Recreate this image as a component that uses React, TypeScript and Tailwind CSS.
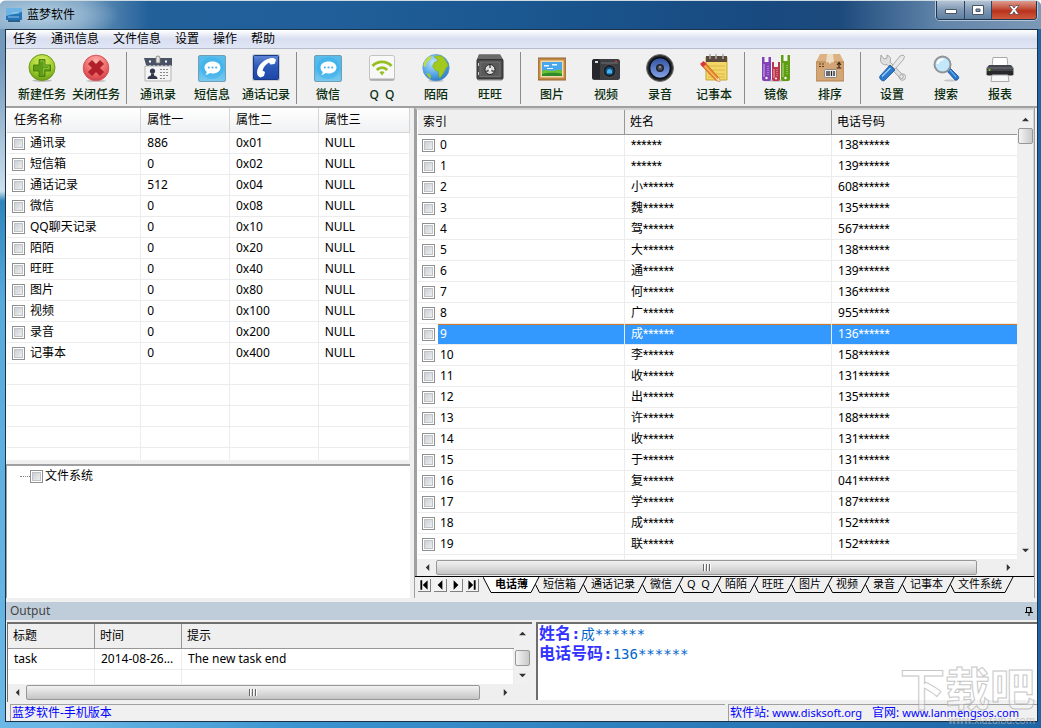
import type { ReactNode } from 'react';
import clsx from 'clsx';

const MENUS = ['任务', '通讯信息', '文件信息', '设置', '操作', '帮助'];

const TASKS: [string, string, string][] = [
  ['通讯录', '886', '0x01'],
  ['短信箱', '0', '0x02'],
  ['通话记录', '512', '0x04'],
  ['微信', '0', '0x08'],
  ['QQ聊天记录', '0', '0x10'],
  ['陌陌', '0', '0x20'],
  ['旺旺', '0', '0x40'],
  ['图片', '0', '0x80'],
  ['视频', '0', '0x100'],
  ['录音', '0', '0x200'],
  ['记事本', '0', '0x400'],
];

// [surname, phone prefix], the rest is masked
const CONTACTS: [string, string][] = [
  ['', '138'],
  ['', '139'],
  ['小', '608'],
  ['魏', '135'],
  ['驾', '567'],
  ['大', '138'],
  ['通', '139'],
  ['何', '136'],
  ['广', '955'],
  ['成', '136'],
  ['李', '158'],
  ['收', '131'],
  ['出', '135'],
  ['许', '188'],
  ['收', '131'],
  ['于', '131'],
  ['复', '041'],
  ['学', '187'],
  ['成', '152'],
  ['联', '152'],
];

const SELECTED = 9;

const SHEETS = ['电话薄', '短信箱', '通话记录', '微信', 'Q  Q', '陌陌', '旺旺', '图片', '视频', '录音', '记事本', '文件系统'];

/* ---------- toolbar icons ---------- */

function Icon({ children }: { children: ReactNode }) {
  return (
    <svg viewBox="0 0 28 28" className="size-7" aria-hidden="true">
      {children}
    </svg>
  );
}

function AddIcon() {
  return (
    <Icon>
      <defs>
        <radialGradient id="add" cx=".5" cy=".25" r=".8">
          <stop offset="0" stopColor="#d9ee62" />
          <stop offset=".6" stopColor="#9ecb2c" />
          <stop offset="1" stopColor="#5f9410" />
        </radialGradient>
      </defs>
      <ellipse cx="14" cy="26.6" rx="10" ry="1.3" fill="#bbb" />
      <circle cx="14" cy="13.5" r="13" fill="url(#add)" stroke="#6c9b1e" />
      <path d="M11 5.5h6v5.5h5.5v6H17v5.500h-6V17H5.500v-6H11z" fill="#5f9d18" stroke="#3a7509" strokeWidth=".8" />
      <path d="M12 7h4v5h5v2.500h-5.500V20" fill="none" stroke="#8cc43a" strokeWidth=".9" />
    </Icon>
  );
}

function CloseTaskIcon() {
  return (
    <Icon>
      <defs>
        <radialGradient id="del" cx=".5" cy=".25" r=".8">
          <stop offset="0" stopColor="#ffb3ac" />
          <stop offset=".6" stopColor="#ee6364" />
          <stop offset="1" stopColor="#c93a42" />
        </radialGradient>
      </defs>
      <ellipse cx="14" cy="26.800" rx="10" ry="1.200" fill="#c4c4c4" />
      <circle cx="14" cy="14" r="12.800" fill="url(#del)" stroke="#d5575c" />
      <path
        d="M10 6.500l4 4 4-4 3.500 3.500-4 4 4 4L18 21.500l-4-4-4 4L6.500 18l4-4-4-4z"
        fill="#b3202c"
        stroke="#931822"
        strokeWidth=".8"
        strokeLinejoin="round"
      />
    </Icon>
  );
}

function ContactsIcon() {
  return (
    <Icon>
      <path d="M1 12h26v15H1z" fill="#f4f4f4" stroke="#b5b5b5" />
      <path d="M0 4h28v8l-2-1-2 1-2-1-2 1-2-1-2 1-2-1-2 1-2-1-2 1-2-1-2 1-2-1z" fill="#4a5265" />
      <path d="M5 6.500h2v2H5zM21 6.500h2v2h-2z" fill="#fff" />
      <path d="M12 4a2 2 0 0 1 4 0v5h-4z" fill="#e2e2e2" stroke="#777" strokeWidth=".8" />
      <circle cx="8.500" cy="17" r="2.600" fill="#33394a" />
      <path d="M3.500 25c0-2 1-3 3.500-3.500v-2h3v2c2.500.500 3.500 1.500 3.500 3.500z" fill="#33394a" />
      <path d="M16 15.500h9M16 18.500h9M16 21.500h9M16 24.500h6" stroke="#888" strokeDasharray="2 1" />
    </Icon>
  );
}

function ChatIcon() {
  return (
    <Icon>
      <defs>
        <linearGradient id="chat" x1="0" y1="0" x2="0" y2="1">
          <stop offset="0" stopColor="#5bbdea" />
          <stop offset=".5" stopColor="#4ab8ee" />
          <stop offset="1" stopColor="#7cc9ee" />
        </linearGradient>
      </defs>
      <rect x=".5" y="1.500" width="27" height="26" rx="1.500" fill="url(#chat)" stroke="#6f9fb5" />
      <circle cx="14" cy="14" r="11" fill="#38aeea" opacity=".5" />
      <path
        d="M14.500 7.500c4.700 0 8 2.600 8 6s-3.300 6-8 6c-1 0-2-.100-2.900-.400-1 1-2.500 1.800-4.400 1.900 1-.900 1.500-2 1.500-3.200-1.400-1.100-2.200-2.600-2.200-4.300 0-3.400 3.300-6 8-6z"
        fill="#fff"
      />
      <circle cx="10.800" cy="13.500" r="1.100" fill="#45b1ea" />
      <circle cx="14.500" cy="13.500" r="1.100" fill="#45b1ea" />
      <circle cx="18.200" cy="13.500" r="1.100" fill="#45b1ea" />
    </Icon>
  );
}

function PhoneIcon() {
  return (
    <Icon>
      <defs>
        <linearGradient id="phone" x1="0" y1="0" x2="0" y2="1">
          <stop offset="0" stopColor="#5f86d6" />
          <stop offset=".45" stopColor="#2c58b8" />
          <stop offset="1" stopColor="#1c47a8" />
        </linearGradient>
      </defs>
      <rect x="0" y="0" width="28" height="27" rx="2" fill="#c8cacf" />
      <rect x="1.500" y="1.500" width="25" height="24" rx="1" fill="url(#phone)" stroke="#163a85" />
      <path
        d="M17.500 4.500c2.500-1 5.500-.500 6.500 1.500l-1.500 4-4 .5-1.500-2c-3 1.500-5.500 4.500-6.500 8l2.500 1.500-1 4-3.500 1.500c-2-.500-3.500-2.500-3.500-5 .500-6.500 5.500-12.500 12.500-14z"
        fill="#fff"
      />
    </Icon>
  );
}

function WifiIcon() {
  return (
    <Icon>
      <rect x="1.500" y="1.500" width="25" height="25" rx="2" fill="#f8f8f8" stroke="#c3c3c3" />
      <path d="M2 25.500h24" stroke="#adadad" strokeWidth="2" />
      <g fill="none" stroke="#94c11f" strokeWidth="2.800">
        <path d="M4.500 12c5-5.500 14-5.500 19 0" />
        <path d="M8.800 16c3-3.200 7.400-3.200 10.400 0" />
      </g>
      <path d="M11.500 18.300c1.500-1.300 3.500-1.300 5 0L14 21.500z" fill="#94c11f" />
    </Icon>
  );
}

function GlobeIcon() {
  return (
    <Icon>
      <defs>
        <radialGradient id="globe" cx=".4" cy=".3" r=".8">
          <stop offset="0" stopColor="#bfe6ff" />
          <stop offset=".6" stopColor="#4fa3e6" />
          <stop offset="1" stopColor="#2468b8" />
        </radialGradient>
      </defs>
      <ellipse cx="14" cy="27" rx="8" ry="1" fill="#c8c8c8" />
      <circle cx="14" cy="13.700" r="13.200" fill="url(#globe)" stroke="#5b9bd3" strokeWidth=".8" />
      <path
        d="M12 3c3-2 7-1.500 9 0l3 4 2.500 5c-1.500 1-2.500 1-3 3l-2 4-3.500 5c-1.500-1-1-4-1.500-6.500l-3-1-3-4 1.500-4 4-1.500-1-2z"
        fill="#a3c91f"
        stroke="#7ea40d"
        strokeWidth=".5"
      />
      <path d="M2 8l4-5 4-1-1 3-4 3-1 4-2.500 1z" fill="#c1db48" />
      <path d="M4 19l4 1 1 3-1 2z" fill="#a3c91f" />
    </Icon>
  );
}

function SafeIcon() {
  return (
    <Icon>
      <path d="M3 .500h21l3 5v20H1v-20z" fill="#5c5c5c" />
      <path d="M3 .500h21l3 5H1z" fill="#6a6a6a" />
      <rect x="1" y="5.500" width="26" height="19.500" rx="1" fill="#484848" stroke="#333" />
      <rect x="4" y="8" width="20" height="14.500" fill="#5a5a5a" stroke="#727272" />
      <path d="M2.500 9v3M2.500 18v3" stroke="#ccc" />
      <circle cx="14" cy="15.500" r="5" fill="#ddd" stroke="#222" />
      <path d="M14 15.500V11M14 15.500l4 2.300M14 15.500l-4 2.300" stroke="#555" strokeWidth="1.600" />
      <circle cx="14" cy="15.500" r="1.500" fill="#fff" />
      <path d="M2 26h24" stroke="#8a8a8a" />
    </Icon>
  );
}

function PictureIcon() {
  return (
    <Icon>
      <path d="M0 4h28v22H0z" fill="#c28a45" stroke="#96642c" />
      <path d="M2.500 6.500h23v17h-23z" fill="#f2d9a8" />
      <path d="M4 8h20v14H4z" fill="#4aa7ec" />
      <path d="M6 11h5v1.500H6zM14 10h5v1.500h-5zM9 14h6v1H9z" fill="#e8f6ff" />
      <path d="M4 17c5-2.500 9 1 13-.500 3-1 5-1 7 0V22H4z" fill="#6cbf33" />
      <path d="M4 20c6-1 12-2 20 0v2H4z" fill="#2f8a2b" />
    </Icon>
  );
}

function CameraIcon() {
  return (
    <Icon>
      <path d="M8 5h12v3H8z" fill="#555" />
      <rect x="0" y="5" width="28" height="21" rx="2.500" fill="#3c3e42" />
      <path d="M0 8a3 3 0 0 1 3-3h3a2 2 0 0 1 2 2v18H2.500A2.500 2.500 0 0 1 0 22.500z" fill="#25272a" />
      <path d="M9 9h17" stroke="#6c7076" />
      <rect x="3" y="7" width="3" height="2" fill="#ddd" />
      <circle cx="24" cy="7.500" r="1" fill="#e33" />
      <circle cx="17.500" cy="17" r="6.500" fill="#1b1d20" stroke="#4c4f54" />
      <circle cx="17.500" cy="17" r="4" fill="#14507c" />
      <path d="M15 17.500a2.500 2.500 0 0 1 5 0v2h-5z" fill="#41b2f2" />
    </Icon>
  );
}

function SpeakerIcon() {
  return (
    <Icon>
      <defs>
        <linearGradient id="cone" x1="0" y1="0" x2="0" y2="1">
          <stop offset="0" stopColor="#2f4f9c" />
          <stop offset="1" stopColor="#87a5ea" />
        </linearGradient>
      </defs>
      <circle cx="14" cy="14" r="13.500" fill="#2a2c30" stroke="#777" />
      <circle cx="14" cy="14" r="10.500" fill="url(#cone)" stroke="#0c0d10" strokeWidth="1.500" />
      <circle cx="14" cy="14" r="4" fill="#1d2230" />
      <circle cx="14" cy="14" r="2.500" fill="#4b4e55" />
      <circle cx="14" cy="13" r="1" fill="#9a9ea8" />
    </Icon>
  );
}

function NoteIcon() {
  return (
    <Icon>
      <path d="M6 3h21v23H6z" fill="#f4d667" stroke="#c9a53b" />
      <path d="M6 2h21v6H6z" fill="#5a4a3e" />
      <path d="M10 0v5M16 0v5M23 0v5" stroke="#aaa" strokeWidth="1.500" />
      <path d="M8 12h17M8 16h17M8 20h17M8 23h17" stroke="#d9b748" />
      <path d="M1.500 11.500l3.500-3 14 15.500 1 3.500-4-1z" fill="#f08c2e" stroke="#b55b13" strokeWidth=".7" />
      <path d="M3 10l14 15" stroke="#ffd28a" />
      <path d="M0 10l3.500-3 3 3-3.500 3z" fill="#d9363e" />
      <path d="M16 26l3-2.500 1 4z" fill="#f5e0bd" />
    </Icon>
  );
}

function BooksIcon() {
  return (
    <Icon>
      <ellipse cx="14" cy="26.500" rx="13" ry="1.200" fill="#bdbdbd" />
      <path d="M0 3h9v22a2 2 0 0 1-2 2H2a2 2 0 0 1-2-2z" fill="#8340b8" />
      <path d="M10 8h8v17a2 2 0 0 1-2 2h-4a2 2 0 0 1-2-2z" fill="#b9364c" />
      <path d="M19 1h9v24a2 2 0 0 1-2 2h-5a2 2 0 0 1-2-2z" fill="#5f9e12" />
      <path d="M2.500 3h4v5h-4zM12 8h4v5h-4zM21.500 1h4v6h-4z" fill="#f2f2f2" />
      <path d="M2 10v13M12 15v9M21 9v14" stroke="#fff" strokeOpacity=".4" strokeWidth="1.500" />
      <path d="M6 12v9M15 15v7M25 11v10" stroke="#fff" strokeOpacity=".6" strokeDasharray="1 1" />
      <circle cx="4.500" cy="24" r="1.200" fill="#fff" />
      <circle cx="14" cy="24.500" r="1" fill="#fff" />
      <circle cx="23.500" cy="24" r="1.200" fill="#fff" />
    </Icon>
  );
}

function BoxIcon() {
  return (
    <Icon>
      <path d="M4 0h20l4 8H0z" fill="#dcb283" />
      <path d="M0 8h28v19H0z" fill="#d3a474" stroke="#b0834f" />
      <path d="M11 0h6l1 9-2-1-2 2-2-2-2 1z" fill="#eeddc5" />
      <path d="M3 10h6M3 12.500h5" stroke="#5e3e1f" strokeDasharray="2 1" />
      <path d="M23 14V9M21 11l2-2.500 2 2.500M20.500 14h5" stroke="#3c2512" strokeWidth="1.200" fill="none" />
      <rect x="8.500" y="15.500" width="12" height="8" rx="1" fill="#eee" stroke="#888" />
      <path d="M11 17v5M13 17v5M15.500 17v5M18 17v5" stroke="#222" strokeWidth="1.300" />
    </Icon>
  );
}

function ToolsIcon() {
  return (
    <Icon>
      <path
        d="M3 1l3 4 3-1 0-3c3 1 4.500 4 3 7l12 12c3-.500 4.500 2 3.500 4.500-1.500 2.500-6 2.500-6.500-1.500L9 10.500C6 12 2 9 2.500 5z"
        fill="#dedede"
        stroke="#999"
        strokeWidth=".8"
      />
      <circle cx="23.500" cy="22.500" r="1.800" fill="#f0f0f0" stroke="#999" strokeWidth=".8" />
      <path d="M22 2l3-1 1.500 1.500-1 3L17 15l-3-3z" fill="#e9e9e9" stroke="#999" strokeWidth=".8" />
      <path d="M12 11l5 5L6.500 26.500c-2 1.500-6-2-4.500-4.500z" fill="#2b7ad0" stroke="#17508f" strokeWidth=".8" />
      <path d="M12.500 14L4 22.500" stroke="#9ad0fa" strokeWidth="1.300" />
    </Icon>
  );
}

function SearchIcon() {
  return (
    <Icon>
      <ellipse cx="18" cy="26.500" rx="6" ry="1" fill="#c5c5c5" />
      <path d="M15 17l3-3 8.500 8.500c1 2-1.500 4.500-3.500 3.500z" fill="#2878cf" stroke="#174f92" strokeWidth=".8" />
      <path d="M18 16l6 7" stroke="#8fc6f5" />
      <circle cx="10.500" cy="10.500" r="8" fill="#c3e8fb" stroke="#8f9499" strokeWidth="2" />
      <path d="M5.500 10a5 5 0 0 1 6-4.500" fill="none" stroke="#fff" strokeWidth="2" />
    </Icon>
  );
}

function PrinterIcon() {
  return (
    <Icon>
      <path d="M7 3.500h14l1 9H6z" fill="#fff" stroke="#aaa" />
      <path d="M3 11h22l2.500 3v7H.500v-7z" fill="#43464c" />
      <path d="M1 14h26" stroke="#73767d" />
      <rect x="1" y="17" width="26" height="4.500" rx="1" fill="#26282c" />
      <path d="M6 21h16l1 6.500H5z" fill="#f7f7f7" stroke="#aaa" />
      <circle cx="3.500" cy="16" r="1" fill="#8ad420" />
    </Icon>
  );
}

const TOOL_GROUPS: { label: string; icon: ReactNode }[][] = [
  [
    { label: '新建任务', icon: <AddIcon /> },
    { label: '关闭任务', icon: <CloseTaskIcon /> },
  ],
  [
    { label: '通讯录', icon: <ContactsIcon /> },
    { label: '短信息', icon: <ChatIcon /> },
    { label: '通话记录', icon: <PhoneIcon /> },
  ],
  [
    { label: '微信', icon: <ChatIcon /> },
    { label: 'Q  Q', icon: <WifiIcon /> },
    { label: '陌陌', icon: <GlobeIcon /> },
    { label: '旺旺', icon: <SafeIcon /> },
  ],
  [
    { label: '图片', icon: <PictureIcon /> },
    { label: '视频', icon: <CameraIcon /> },
    { label: '录音', icon: <SpeakerIcon /> },
    { label: '记事本', icon: <NoteIcon /> },
  ],
  [
    { label: '镜像', icon: <BooksIcon /> },
    { label: '排序', icon: <BoxIcon /> },
  ],
  [
    { label: '设置', icon: <ToolsIcon /> },
    { label: '搜索', icon: <SearchIcon /> },
    { label: '报表', icon: <PrinterIcon /> },
  ],
];

/* ---------- small shared pieces ---------- */

function Check({ label }: { label: string }) {
  return (
    <input
      type="checkbox"
      aria-label={label}
      className="block size-[13px] shrink-0 appearance-none border border-[#8e8f8f] bg-linear-to-br from-[#c3c8ce] to-[#f6f6f6] shadow-[inset_0_0_0_1px_#fff,inset_0_0_0_2px_#bfc3c8] checked:bg-[#3399ff]"
    />
  );
}

function Stars() {
  return <span className="font-[Roboto]">******</span>;
}

const ARROWS = {
  up: 'M0 6l4-4 4 4z',
  down: 'M0 2l4 4 4-4z',
  left: 'M6 0L2 4l4 4z',
  right: 'M2 0l4 4-4 4z',
};

function Arrow({ dir }: { dir: keyof typeof ARROWS }) {
  return (
    <button type="button" aria-label={dir} className="flex size-[18px] shrink-0 items-center justify-center">
      <svg viewBox="0 0 8 8" className="size-[7px]">
        <path d={ARROWS[dir]} fill="#333" />
      </svg>
    </button>
  );
}

function HScroll({ tail }: { tail: string }) {
  return (
    <div className="flex h-4 min-w-0 flex-1 items-center bg-[#efefef]">
      <Arrow dir="left" />
      <div className="flex h-[15px] flex-1 items-center justify-center gap-px rounded-xs border border-[#979797] bg-linear-to-b from-[#f2f2f2] via-[#dcdcdc] to-[#c4c4c6]">
        <i className="h-[7px] w-0.5 border-r border-white bg-[#666]" />
        <i className="h-[7px] w-0.5 border-r border-white bg-[#666]" />
        <i className="h-[7px] w-0.5 border-r border-white bg-[#666]" />
      </div>
      <div className={tail} />
      <Arrow dir="right" />
    </div>
  );
}

function VScroll({ grow }: { grow?: boolean }) {
  return (
    <div className="flex w-4 shrink-0 flex-col items-center bg-[#f0f0f0]">
      <Arrow dir="up" />
      {!grow && <div className="h-2" />}
      <div className="h-4 w-[15px] shrink-0 rounded-xs border border-[#979797] bg-linear-to-r from-[#f4f4f4] to-[#c9c9cb]" />
      {grow && <div className="flex-1" />}
      <Arrow dir="down" />
    </div>
  );
}

/* ---------- window parts ---------- */

function TitleBar() {
  return (
    <header className="flex h-7 shrink-0 items-start">
      <div className="flex h-7 flex-1 items-center gap-[5px] bg-[radial-gradient(ellipse_80px_26px_at_40px_14px,#a9c6dc_20%,transparent_100%)] pl-[6px]">
        <svg viewBox="0 0 16 14" className="h-3.5 w-4">
          <path d="M0 0h16v12H0z" fill="#2474b8" />
          <path d="M0 0h16v4L0 8z" fill="#6db4e4" />
          <path d="M2 12h12v2H2z" fill="#2b5f8c" />
          <path d="M2 9h11M6 5h7" stroke="#bfe2f7" strokeWidth=".7" />
        </svg>
        <h1 className="text-[12px] leading-4">蓝梦软件</h1>
      </div>
      <div className="mr-1 flex h-[19px] overflow-hidden rounded-b-[4px] border border-t-0 border-[#1d3550] shadow-[0_0_0_1px_#b4c6d8]">
        <button
          type="button"
          aria-label="最小化"
          className="flex w-7 items-center justify-center border-r border-[#2b4664] bg-linear-to-b from-[#b4c3d5] via-[#7e97b2] via-50% to-[#5f7f9f]"
        >
          <svg viewBox="0 0 12 6" className="mt-1 h-1.5 w-3">
            <path d="M.500.500h11v4H.500z" fill="#fff" stroke="#4a5565" />
          </svg>
        </button>
        <button
          type="button"
          aria-label="最大化"
          className="flex w-[27px] items-center justify-center border-r border-[#2b4664] bg-linear-to-b from-[#b4c3d5] via-[#7e97b2] via-50% to-[#5f7f9f]"
        >
          <svg viewBox="0 0 12 11" className="h-[11px] w-3">
            <path d="M.500.500h11v9H.500zM4 4v2.500h4V4z" fill="#fff" fillRule="evenodd" stroke="#4a5565" />
          </svg>
        </button>
        <button
          type="button"
          aria-label="关闭"
          className="flex w-11 items-center justify-center bg-linear-to-b from-[#dd9c90] via-[#b8321c] via-55% to-[#cf5a3c]"
        >
          <svg viewBox="0 0 12 10" className="h-2.5 w-3">
            <path
              d="M1 .500h3.200L6 3 7.800.500H11L7.700 4.800 11 9.500H7.800L6 6.700 4.200 9.500H1l3.300-4.700z"
              fill="#fff"
              stroke="#5a4a52"
              strokeWidth=".8"
            />
          </svg>
        </button>
      </div>
    </header>
  );
}

function MenuBar() {
  return (
    <nav className="flex h-[19px] shrink-0 items-center gap-3.5 border-b border-[#b6bccc] bg-linear-to-b from-white via-[#d9dff0] via-50% to-[#e0e6f5] pl-[7px]">
      {MENUS.map((m) => (
        <button key={m} type="button" className="leading-4">
          {m}
        </button>
      ))}
    </nav>
  );
}

function Toolbar() {
  return (
    <div className="flex h-[59px] shrink-0 items-start border-b-2 border-[#a0a0a0] pt-[3px] pl-[9px]">
      {TOOL_GROUPS.map((group, i) => (
        <div key={i} className="flex">
          {i > 0 && <div className="mr-1 ml-[3px] h-[52px] w-px bg-[#8c8c8c]" />}
          {group.map((tool) => (
            <button key={tool.label} type="button" className="flex w-[54px] flex-col items-center pt-0.5">
              {tool.icon}
              <span className="mt-[5px] leading-4 font-medium whitespace-pre text-[#0a2c0e]">{tool.label}</span>
            </button>
          ))}
        </div>
      ))}
    </div>
  );
}

function TaskTable() {
  const blanks = [0, 1, 2, 3, 4];
  const cell = 'h-[21px] border-r border-b border-[#ececec] p-0';
  const head =
    'h-[25px] border-r border-b border-[#d5d5d5] bg-linear-to-b from-white to-[#f0f1f3] p-0 text-left font-normal';
  return (
    <div className="min-h-0 flex-1 overflow-hidden bg-white pl-px">
      <table className="w-full table-fixed border-separate border-spacing-0">
        <colgroup>
          <col className="w-1/3" />
          <col className="w-[22%]" />
          <col className="w-[22%]" />
          <col />
        </colgroup>
        <thead>
          <tr>
            <th className={clsx(head, 'pl-[7px]')}>任务名称</th>
            <th className={clsx(head, 'pl-1.5')}>属性一</th>
            <th className={clsx(head, 'pl-1.5')}>属性二</th>
            <th className={clsx(head, 'pl-1.5')}>属性三</th>
          </tr>
        </thead>
        <tbody>
          {TASKS.map(([name, count, mask]) => (
            <tr key={name}>
              <td className={clsx(cell, 'pl-[5px]')}>
                <label className="flex items-center gap-[5px]">
                  <Check label={name} />
                  <span>{name}</span>
                </label>
              </td>
              <td className={clsx(cell, 'pl-1.5')}>{count}</td>
              <td className={clsx(cell, 'pl-1.5')}>{mask}</td>
              <td className={clsx(cell, 'pl-1.5')}>NULL</td>
            </tr>
          ))}
          {blanks.map((b) => (
            <tr key={b}>
              <td className={cell} />
              <td className={cell} />
              <td className={cell} />
              <td className={cell} />
            </tr>
          ))}
        </tbody>
      </table>
    </div>
  );
}

function ContactTable() {
  const head = 'h-[25px] border-b border-[#979797] bg-[#efefef] p-0 pl-[5px] text-left font-normal';
  return (
    <div className="min-w-0 flex-1 overflow-hidden bg-white pl-px">
      <table className="w-full table-fixed border-separate border-spacing-0">
        <colgroup>
          <col className="w-5" />
          <col className="w-[187px]" />
          <col className="w-[207px]" />
          <col />
        </colgroup>
        <thead>
          <tr>
            <th colSpan={2} className={clsx(head, 'border-r')}>
              索引
            </th>
            <th className={clsx(head, 'border-r')}>姓名</th>
            <th className={head}>电话号码</th>
          </tr>
        </thead>
        <tbody>
          {[...CONTACTS, null].map((row, i) => {
            const selected = i === SELECTED;
            const cell = clsx(
              'h-[21px] border-b border-[#ececec] p-0',
              selected && 'bg-[#3399ff] text-white shadow-[inset_0_1px_0_#d07a28]',
            );
            return (
              <tr key={i}>
                <td className="h-[21px] border-b border-[#ececec] p-0 pl-1">
                  {row && <Check label={`选择 ${i}`} />}
                </td>
                <td className={clsx(cell, 'border-r pl-0.5')}>{row && i}</td>
                <td className={clsx(cell, 'border-r pl-1.5')}>
                  {row && (
                    <>
                      {row[0]}
                      <Stars />
                    </>
                  )}
                </td>
                <td className={clsx(cell, 'pl-1.5')}>
                  {row && (
                    <>
                      {row[1]}
                      <Stars />
                    </>
                  )}
                </td>
              </tr>
            );
          })}
        </tbody>
      </table>
    </div>
  );
}

const NAV_PATHS = ['M2 1h1.500v8H2zM8 1v8L4 5z', 'M7 1v8L3 5z', 'M3 1v8l4-4z', 'M2 1v8l4-4zM6.500 1H8v8H6.500z'];

function SheetTabs() {
  return (
    <div className="flex h-[22px] shrink-0 items-start border-t border-black pl-[3px]">
      <div className="flex gap-[3px] pt-0.5">
        {NAV_PATHS.map((d, i) => (
          <button
            key={i}
            type="button"
            aria-label={`导航 ${i + 1}`}
            className="size-[13px] border-r border-b border-[#808080] bg-[#f3f3f3]"
          >
            <svg viewBox="0 0 10 10" className="size-3">
              <path d={d} />
            </svg>
          </button>
        ))}
      </div>
      <svg viewBox="0 0 9 16" className="ml-1 h-4 w-[9px]">
        <path d="M0 0l8 15.500h1V0z" fill="#fff" />
        <path d="M0 0l8 15.500h1" fill="none" stroke="#000" />
      </svg>
      {SHEETS.map((name, i) => (
        <div key={name} className="flex">
          <button
            type="button"
            className={clsx(
              'flex h-4 items-start border-b border-black px-[3px] text-[11px] leading-[13px] whitespace-pre',
              i === 0 && 'bg-white font-bold',
            )}
          >
            {name}
          </button>
          <svg viewBox="0 0 9 16" className="h-4 w-[9px]">
            {i === 0 && <path d="M0 0h8L0 15.500z" fill="#fff" />}
            <path d="M0 15.500L8 0" fill="none" stroke="#000" />
            {i < SHEETS.length - 1 && <path d="M4.500 7.500l4 8H9" fill="none" stroke="#000" />}
          </svg>
        </div>
      ))}
    </div>
  );
}

function OutputTable() {
  const head = 'h-[25px] border-b border-[#979797] bg-[#efefef] p-0 pl-[5px] text-left font-normal';
  const cell = 'h-[21px] border-r border-b border-[#ececec] p-0 pl-1.5 whitespace-nowrap';
  return (
    <section className="flex w-[525px] shrink-0 flex-col border-t-2 border-l border-[#6e6e6e] bg-[#efefef] pb-0.5">
      <div className="flex min-h-0 flex-1">
        <div className="flex min-w-0 flex-1 flex-col">
          <div className="min-h-0 flex-1 overflow-hidden bg-white">
            <table className="w-full table-fixed border-separate border-spacing-0">
              <colgroup>
                <col className="w-[87px]" />
                <col className="w-[87px]" />
                <col />
              </colgroup>
              <thead>
                <tr>
                  <th className={clsx(head, 'border-r')}>标题</th>
                  <th className={clsx(head, 'border-r')}>时间</th>
                  <th className={head}>提示</th>
                </tr>
              </thead>
              <tbody>
                <tr>
                  <td className={cell}>task</td>
                  <td className={cell}>2014-08-26...</td>
                  <td className={cell}>The new task end</td>
                </tr>
                <tr>
                  <td className={cell} />
                  <td className={cell} />
                  <td className={cell} />
                </tr>
              </tbody>
            </table>
          </div>
          <div className="flex shrink-0">
            <HScroll tail="w-4" />
          </div>
        </div>
        <div className="mr-0.5 flex pb-4">
          <VScroll />
        </div>
      </div>
    </section>
  );
}

function StatusBar() {
  return (
    <footer className="flex h-[19px] shrink-0 items-stretch gap-[3px] pt-0.5 pl-1 leading-4 text-[#0000ff]">
      <div className="flex-1 border-t border-l border-[#a0a0a0] pl-px">蓝梦软件-手机版本</div>
      <div className="flex w-[309px] gap-[10px] border-t border-l border-[#a0a0a0] pl-px whitespace-nowrap">
        <span>
          软件站:{' '}
          <a href="#disksoft" className="text-[11px]">
            www.disksoft.org
          </a>
        </span>
        <span>
          官网:{' '}
          <a href="#lanmengsos" className="text-[11px]">
            www.lanmengsos.com
          </a>
        </span>
      </div>
    </footer>
  );
}

export default function App() {
  return (
    <div className="relative flex h-screen min-h-[480px] flex-col overflow-hidden rounded-t-md border-t border-[#cfdbe2] bg-[linear-gradient(#7298bb_0,#7298bb_60px,#cde0ec_190px,#2e86bb_200px,#58aadb_300px,#6bb8e6_100%)] font-['Noto_Sans','Noto_Sans_CJK_SC',sans-serif] text-[12px] text-black">
      <div className="bg-[linear-gradient(90deg,#7fa3c2_0,#6f98bb_80px,#22609a_150px,#205f99_330px,#1b5790_520px,#184a80_760px,#1d4a7c_840px,#6285aa_940px,#7c98b6_100%)]">
        <TitleBar />
      </div>
      <div className="flex min-h-0 flex-1 bg-[linear-gradient(90deg,transparent_0,transparent_60px,#3a94cf_300px,#1f66a6_100%)] pr-[3px] pb-1.5 pl-[5px]">
        <div className="flex min-w-0 flex-1 flex-col border border-[#1c3248] bg-[#f0f0f0]">
          <MenuBar />
          <Toolbar />

          <main className="flex min-h-0 flex-1 gap-1">
            <div className="flex w-[404px] shrink-0 flex-col gap-1">
              <TaskTable />
              <div className="h-[134px] shrink-0 border-t-2 border-l border-[#a0a0a0] bg-white">
                <label className="flex items-center pt-px pl-[13px]">
                  <span className="w-2.5 border-t border-dotted border-[#808080]" />
                  <Check label="文件系统" />
                  <span className="pl-0.5 leading-[18px]">文件系统</span>
                </label>
              </div>
            </div>

            <div className="mr-0.5 flex min-w-0 flex-1 flex-col border-r border-l border-[#a0a0a0]">
              <div className="flex min-h-0 flex-1 flex-col border-t-2 border-r border-l-2 border-[#d4d4d4] border-l-[#a0a0a0]">
                <div className="flex min-h-0 flex-1">
                  <ContactTable />
                  <VScroll grow />
                </div>
                <div className="flex shrink-0 pr-4 pb-px pl-px">
                  <HScroll tail="w-[22px]" />
                </div>
              </div>
              <SheetTabs />
            </div>
          </main>

          <div className="mt-1 flex h-[18px] shrink-0 items-center justify-between bg-[#bfcddb] pr-1 pl-1 text-[#444]">
            <h2>Output</h2>
            <button type="button" aria-label="固定">
              <svg viewBox="0 0 8 9" className="h-[9px] w-2">
                <path d="M1.500.500h4.500v5h-4.500zM0 5.500h8M4 5.500V9M5.500.500v5" fill="none" stroke="#000" />
              </svg>
            </button>
          </div>

          <div className="mt-0.5 flex h-20 shrink-0 gap-1 pl-px">
            <OutputTable />
            <section className="mb-0.5 min-w-0 flex-1 border-t-2 border-l-2 border-[#6e6e6e] bg-white pl-px font-['DejaVu_Sans_Mono','Noto_Sans_CJK_SC',monospace] text-[14px] leading-5 text-[#0066cc]">
              <p>
                <b className="text-[16px] leading-5 text-[#3333ff]">姓名:</b>成******
              </p>
              <p>
                <b className="text-[16px] leading-5 text-[#3333ff]">电话号码:</b>136******
              </p>
            </section>
          </div>

          <StatusBar />
        </div>
      </div>

      {/* site stamp over the lower right corner */}
      <div className="pointer-events-none absolute right-1.5 bottom-0 flex flex-col items-end opacity-70">
        <span className="text-[45px] leading-[46px] font-bold text-white/50 [-webkit-text-stroke:1px_#b0b0b0]">下载吧</span>
        <span className="text-[10px] leading-[16px] text-[#b5b5b5]">www.xiazaiba.com</span>
      </div>
    </div>
  );
}
